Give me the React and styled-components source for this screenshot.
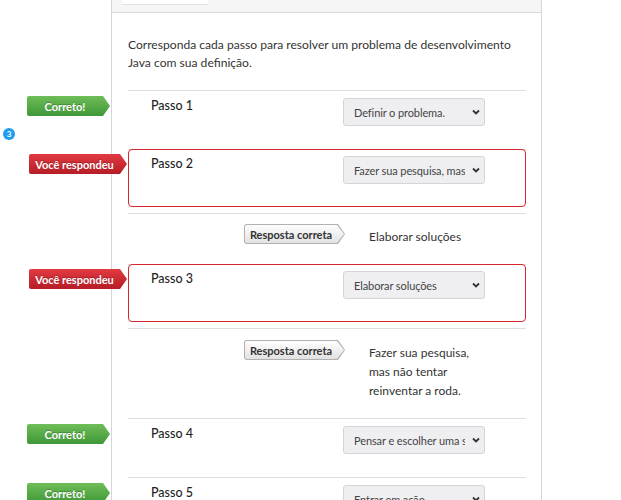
import React from 'react';
import styled, { createGlobalStyle } from 'styled-components';

const Global = createGlobalStyle`
  html, body { margin: 0; padding: 0; background: #fff; }
  body { font-family: Lato, "Open Sans", sans-serif; }
`;

const Page = styled.div`
  position: relative;
  width: 621px;
  height: 500px;
  overflow: hidden;
  padding-left: 111px;
  box-sizing: border-box;
`;

const StepBadge = styled.span`
  position: absolute;
  left: 3px;
  top: 128px;
  width: 12px;
  height: 12px;
  border-radius: 50%;
  background: #1e9cf0;
  color: #fff;
  font: bold 8px Lato, sans-serif;
  display: flex;
  align-items: center;
  justify-content: center;
`;

const Card = styled.section`
  width: 431px;
  min-height: 100%;
  box-sizing: border-box;
  border-left: 1px solid #d6d6d6;
  border-right: 1px solid #d6d6d6;
`;

const CardHeader = styled.div`
  height: 12px;
  background: #f6f6f7;
  border-bottom: 1px solid #d9d9d9;
  padding-left: 10px;
  display: flex;
  align-items: flex-start;
`;

const HeaderTab = styled.div`
  width: 86px;
  height: 4px;
  background: #fff;
  border-bottom: 1px solid #e2e2e2;
`;

const Body = styled.div`
  padding: 23px 15px 0 16px;
`;

const Prompt = styled.p`
  margin: 0 0 18px;
  font-size: 12.1px;
  line-height: 18px;
  color: #333;
`;

const List = styled.ol`
  list-style: none;
  margin: 0;
  padding: 0;
`;

const Item = styled.li`
  border-top: 1px solid #dedede;
`;

const Row = styled.div`
  position: relative;
  display: grid;
  grid-template-columns: 192px 142px;
  align-items: start;
  padding: 6px 0 22px 22px;
  margin-top: ${p => (p.$wrong ? '-1px' : '0')};
  border: 1px solid ${p => (p.$wrong ? '#d8262e' : 'transparent')};
  border-radius: 4px;
`;

const StepLabel = styled.span`
  font-size: 12.5px;
  line-height: 16px;
  color: #1f1f1f;
  font-weight: 500;
`;

const arrow = 'polygon(0 0, calc(100% - 7px) 0, 100% 50%, calc(100% - 7px) 100%, 0 100%)';

const ResultTag = styled.span`
  position: absolute;
  top: 4px;
  right: calc(100% + ${p => p.$gap}px);
  width: ${p => p.$w}px;
  height: 20px;
  box-sizing: border-box;
  padding-right: 7px;
  display: flex;
  align-items: center;
  justify-content: center;
  font: bold 11px Lato, sans-serif;
  color: #fff;
  text-shadow: 0 -1px 0 rgba(0, 0, 0, 0.25);
  white-space: nowrap;
  background: ${p =>
    p.$tone === 'ok'
      ? 'linear-gradient(#6fbd57, #3f9838)'
      : 'linear-gradient(#e23a41, #b51d26)'};
  border-radius: 2px 0 0 2px;
  clip-path: ${arrow};
`;

const SelectWrap = styled.div`
  position: relative;
  width: 142px;
  height: 28px;
`;

const Select = styled.select`
  appearance: none;
  -webkit-appearance: none;
  width: 100%;
  height: 100%;
  box-sizing: border-box;
  margin: 0;
  padding: 0 19px 0 10px;
  background: #efeff1;
  border: 1px solid #d5d5d9;
  border-radius: 3px;
  font: 11px Lato, sans-serif;
  letter-spacing: -0.1px;
  color: #444;
  outline: none;
`;

const Chevron = styled.svg`
  position: absolute;
  right: 5px;
  top: 50%;
  transform: translateY(-50%);
  pointer-events: none;
`;

const Correction = styled.div`
  margin-top: 6px;
  border-top: 1px solid #dedede;
  display: flex;
  align-items: flex-start;
  gap: 24px;
  padding: ${p => p.$top}px 0 18px 116px;
`;

const AnswerTag = styled.span`
  position: relative;
  flex: none;
  width: 101px;
  height: 20px;
  box-sizing: border-box;
  padding-right: 7px;
  display: flex;
  align-items: center;
  justify-content: center;
  font: bold 11px Lato, sans-serif;
  color: #333;
  white-space: nowrap;
  background: #b1b1b1;
  border-radius: 3px 0 0 3px;
  clip-path: ${arrow};
  &::before {
    content: '';
    position: absolute;
    inset: 1px;
    background: linear-gradient(#fefefe, #e2e2e2);
    border-radius: 2px 0 0 2px;
    clip-path: ${arrow};
  }
  & > span {
    position: relative;
  }
`;

const AnswerText = styled.span`
  margin-top: ${p => p.$top}px;
  width: 112px;
  font-size: 12px;
  line-height: 19px;
  color: #333;
`;

const options = [
  'Definir o problema.',
  'Fazer sua pesquisa, mas não tentar reinventar a roda.',
  'Elaborar soluções',
  'Pensar e escolher uma solução.',
  'Entrar em ação.',
];

const steps = [
  { n: 1, value: 0, ok: true },
  { n: 2, value: 1, ok: false, correct: 'Elaborar soluções' },
  { n: 3, value: 2, ok: false, correct: 'Fazer sua pesquisa, mas não tentar reinventar a roda.' },
  { n: 4, value: 3, ok: true },
  { n: 5, value: 4, ok: true },
];

function StepRow({ step, index }) {
  return (
    <Item>
      <Row $wrong={!step.ok}>
        {step.ok ? (
          <ResultTag $tone="ok" $w={83} $gap={19}>Correto!</ResultTag>
        ) : (
          <ResultTag $tone="bad" $w={98} $gap={2}>Você respondeu</ResultTag>
        )}
        <StepLabel>Passo {step.n}</StepLabel>
        <SelectWrap>
          <Select defaultValue={options[step.value]}>
            {options.map(o => (
              <option key={o} value={o}>{o}</option>
            ))}
          </Select>
          <Chevron width="8" height="6" viewBox="0 0 8 6">
            <path d="M1 1.5 L4 4.5 L7 1.5" fill="none" stroke="#333" strokeWidth="1.8" />
          </Chevron>
        </SelectWrap>
      </Row>
      {step.correct && (
        <Correction $top={index === 1 ? 10 : 11}>
          <AnswerTag><span>Resposta correta</span></AnswerTag>
          <AnswerText $top={3}>{step.correct}</AnswerText>
        </Correction>
      )}
    </Item>
  );
}

export default function App() {
  return (
    <>
      <Global />
      <Page>
        <StepBadge>3</StepBadge>
        <Card>
          <CardHeader>
            <HeaderTab />
          </CardHeader>
          <Body>
            <Prompt>
              Corresponda cada passo para resolver um problema de desenvolvimento Java com sua definição.
            </Prompt>
            <List>
              {steps.map((s, i) => (
                <StepRow key={s.n} step={s} index={i} />
              ))}
            </List>
          </Body>
        </Card>
      </Page>
    </>
  );
}
